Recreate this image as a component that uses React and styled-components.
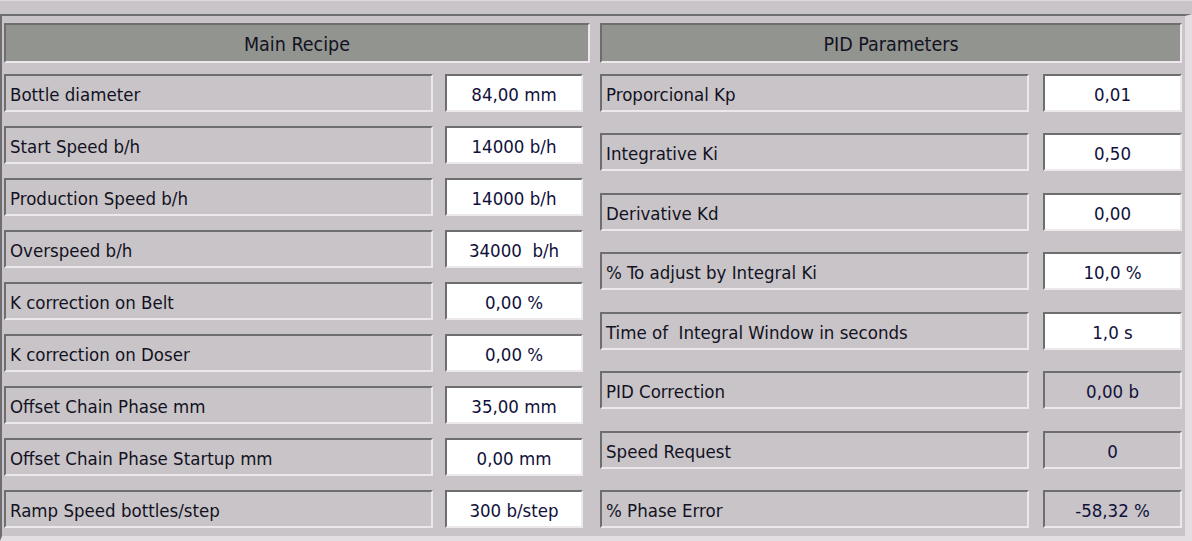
import React from "react";
import styled, { createGlobalStyle } from "styled-components";

const GlobalStyle = createGlobalStyle`
  html, body {
    margin: 0;
    padding: 0;
    background: #c8c4c8;
  }
  body {
    font-family: "DejaVu Sans Condensed", "Liberation Sans", sans-serif;
  }
`;

const mainRecipe = [
  { label: "Bottle diameter", value: "84,00 mm" },
  { label: "Start Speed b/h", value: "14000 b/h" },
  { label: "Production Speed b/h", value: "14000 b/h" },
  { label: "Overspeed b/h", value: "34000  b/h" },
  { label: "K correction on Belt", value: "0,00 %" },
  { label: "K correction on Doser", value: "0,00 %" },
  { label: "Offset Chain Phase mm", value: "35,00 mm" },
  { label: "Offset Chain Phase Startup mm", value: "0,00 mm" },
  { label: "Ramp Speed bottles/step", value: "300 b/step" },
];

const pidParams = [
  { label: "Proporcional Kp", value: "0,01", edit: true },
  { label: "Integrative Ki", value: "0,50", edit: true },
  { label: "Derivative Kd", value: "0,00", edit: true },
  { label: "% To adjust by Integral Ki", value: "10,0 %", edit: true },
  { label: "Time of  Integral Window in seconds", value: "1,0 s", edit: true },
  { label: "PID Correction", value: "0,00 b" },
  { label: "Speed Request", value: "0" },
  { label: "% Phase Error", value: "-58,32 %" },
];

const App = () => {
  return (
    <>
      <GlobalStyle />
      <TopStrip />
      <Frame>
        <Column>
          <Header>Main Recipe</Header>
          <List>
            {mainRecipe.map((r) => (
              <Row key={r.label} $gap={12} $valueWidth={138}>
                <Label>{r.label}</Label>
                <Value $edit>{r.value}</Value>
              </Row>
            ))}
          </List>
        </Column>
        <Column>
          <Header>PID Parameters</Header>
          <List>
            {pidParams.map((r) => (
              <Row key={r.label} $gap={14} $valueWidth={139}>
                <Label>{r.label}</Label>
                <Value $edit={r.edit}>{r.value}</Value>
              </Row>
            ))}
          </List>
        </Column>
      </Frame>
    </>
  );
};

const TopStrip = styled.div`
  height: 13px;
  border-top: 1px solid #dedade;
  background: #c8c4c8;
`;

const Frame = styled.div`
  display: grid;
  grid-template-columns: 586px 582px;
  column-gap: 10px;
  height: 505px;
  padding: 7px 3px 8px 2px;
  border-top: 2px solid #6e6e72;
  border-left: 2px solid #6e6e72;
  border-right: 7px solid #e2dee2;
  border-bottom: 5px solid #e2dee2;
`;

const Column = styled.div`
  display: flex;
  flex-direction: column;
`;

const sunken = `
  box-sizing: border-box;
  border-top: 2px solid #6e6e6e;
  border-left: 2px solid #6e6e6e;
  border-bottom: 2px solid #ece8ec;
  border-right: 2px solid #ece8ec;
`;

const Header = styled.div`
  ${sunken}
  height: 40px;
  padding-top: 3px;
  display: flex;
  align-items: center;
  justify-content: center;
  background: #929490;
  color: #121222;
  font-size: 19.5px;
`;

const List = styled.div`
  flex: 1;
  margin-top: 11px;
  display: flex;
  flex-direction: column;
  justify-content: space-between;
`;

const Row = styled.div`
  display: grid;
  grid-template-columns: 429px ${(p) => p.$valueWidth}px;
  column-gap: ${(p) => p.$gap}px;
  height: 38px;
`;

const Label = styled.div`
  ${sunken}
  display: flex;
  align-items: center;
  padding: 3px 0 0 4px;
  background: #c8c4c8;
  color: #121222;
  font-size: 18.5px;
  white-space: pre;
`;

const Value = styled.div`
  ${sunken}
  display: flex;
  align-items: center;
  justify-content: center;
  padding-top: 3px;
  background: ${(p) => (p.$edit ? "#ffffff" : "#c8c4c8")};
  color: #10103a;
  font-size: 18.5px;
  white-space: pre;
`;

export default App;
